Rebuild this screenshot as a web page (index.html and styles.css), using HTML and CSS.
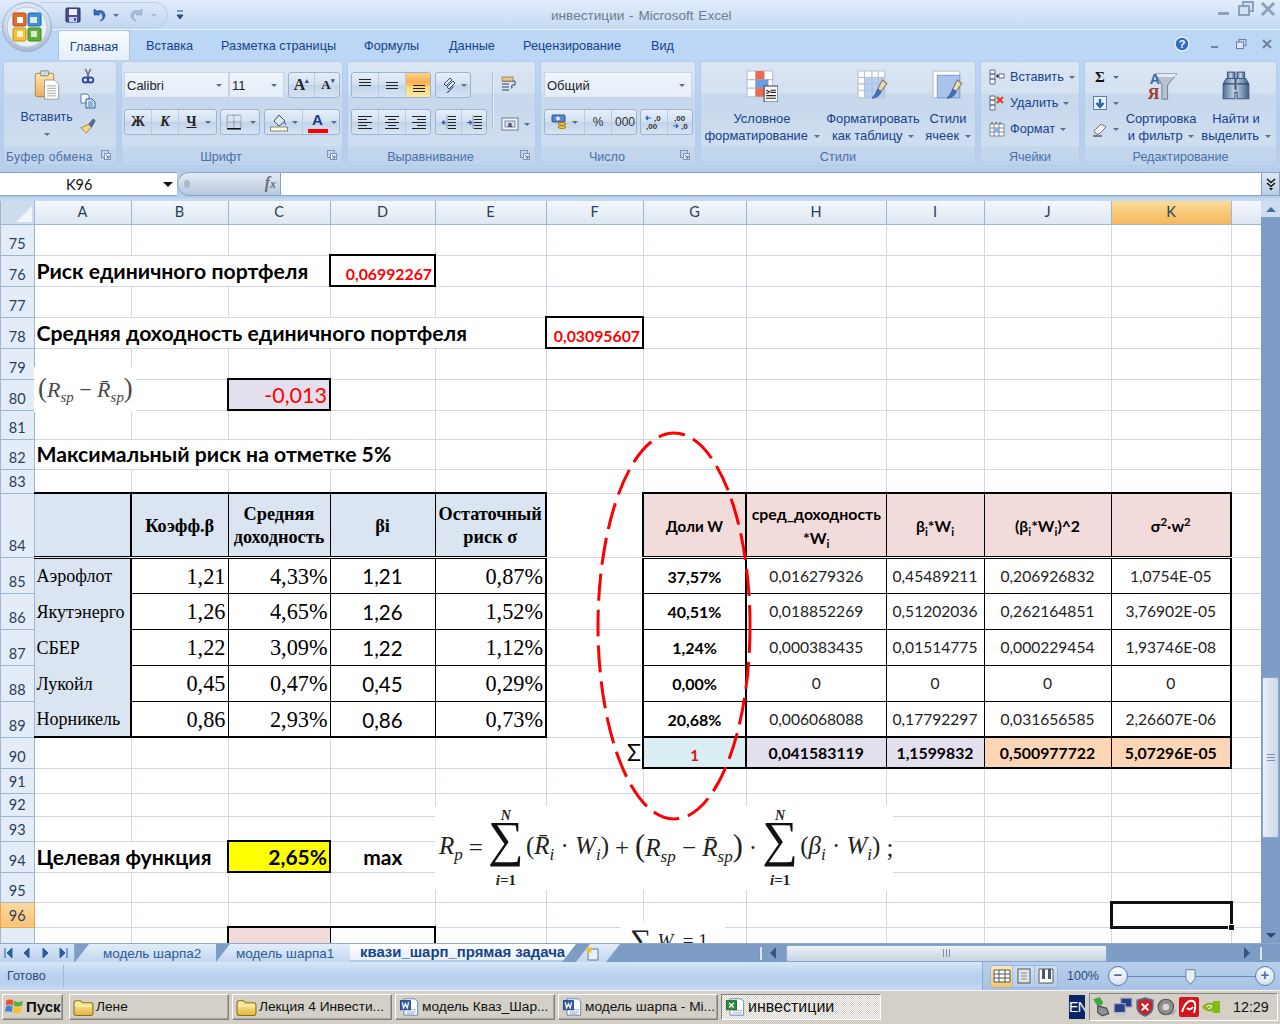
FILE: index.html
```html
<!DOCTYPE html>
<html lang="ru">
<head>
<meta charset="utf-8">
<title>инвестиции - Microsoft Excel</title>
<link rel="stylesheet" href="styles.css">
</head>
<body>
<svg class="defs" width="0" height="0" aria-hidden="true">
  <defs>
    <linearGradient id="gpaper" x1="0" y1="0" x2="0" y2="1"><stop offset="0" stop-color="#ffe7b0"/><stop offset="1" stop-color="#e9b060"/></linearGradient>
    <linearGradient id="gfolder" x1="0" y1="0" x2="0" y2="1"><stop offset="0" stop-color="#fff3a8"/><stop offset="1" stop-color="#e3b63e"/></linearGradient>
    <linearGradient id="gsteel" x1="0" y1="0" x2="1" y2="0"><stop offset="0" stop-color="#4f7098"/><stop offset=".45" stop-color="#c9d8ea"/><stop offset="1" stop-color="#3f5f85"/></linearGradient>
    <symbol id="folder" viewBox="0 0 20 18"><path d="M1 5 Q1 3 3 3H7L9 5H17Q19 5 19 7V15Q19 17 17 17H3Q1 17 1 15Z" fill="url(#gfolder)" stroke="#8a6c1c"/><path d="M2 8H18" stroke="#fff8c8"/></symbol>
    <symbol id="worddoc" viewBox="0 0 22 22"><path d="M5 2H17L20 5V20H5Z" fill="#fff" stroke="#5b7fb2"/><path d="M8 14H18M8 16.500H18M8 18.500H16" stroke="#8aa6cc"/><rect x="1" y="4" width="11" height="10" fill="#3a62a8" stroke="#20407c"/><path d="M3 6L4.500 12L6.500 7.500L8.500 12L10 6" fill="none" stroke="#fff" stroke-width="1.300"/></symbol>
    <symbol id="launcher" viewBox="0 0 10 10"><rect x=".5" y=".5" width="7" height="7" fill="none" stroke="#7b93b4"/><rect x="3.500" y="3.500" width="6" height="6" fill="#f3f7fc" stroke="#7b93b4"/><path d="M5 5L8 8M8 5.500V8H5.500" stroke="#4c6a94" fill="none"/></symbol>
    <symbol id="brush" viewBox="0 0 14 18"><path d="M9 1L13 4L8 11L5 9Z" fill="#e8dcc0" stroke="#8a7a5c"/><path d="M5 9L8 11Q7 16 0 17Q3 14 5 9Z" fill="#3f73c0" stroke="#2b528f" stroke-width=".6"/></symbol>
  </defs>
</svg>

<div class="window">
  <header class="titlebar">
    <div class="qat">
      <svg class="i16" viewBox="0 0 16 16"><rect x="1" y="1" width="14" height="14" rx="1" fill="#4a4f9e" stroke="#262a6a"/><rect x="4" y="2" width="8" height="6" fill="#eef2fa"/><rect x="4" y="10" width="8" height="5" fill="#c9cfe2"/><rect x="9" y="11" width="2" height="3" fill="#4a4f9e"/></svg>
      <svg class="i16 undo" viewBox="0 0 16 16"><path d="M3 2V8H9L7 6Q10 5 11.500 8T9 14Q14 13 14 8Q13 2 6 4L3 2Z" fill="#2f6db5" stroke="#1c4b85" stroke-width=".6"/></svg>
      <span class="caret-s"></span>
      <svg class="i16 redo" viewBox="0 0 16 16"><path d="M13 2V8H7L9 6Q6 5 4.500 8T7 14Q2 13 2 8Q3 2 10 4L13 2Z" fill="#a9bdd6" stroke="#8ea5c2" stroke-width=".6"/></svg>
      <span class="caret-s pale"></span>
    </div>
    <svg class="qat-more" viewBox="0 0 8 12"><path d="M1 2H7M1 6H7L4 10Z" fill="#2b4d7c" stroke="#2b4d7c"/></svg>
    <div class="doc-title">инвестиции - Microsoft Excel</div>
    <div class="win-ctrls">
      <svg class="ctl" viewBox="0 0 16 16"><rect x="2" y="11" width="11" height="3" fill="#8ba1bd"/></svg>
      <svg class="ctl" viewBox="0 0 16 16"><rect x="5" y="1" width="10" height="9" fill="#d3e0f0" stroke="#8ba1bd" stroke-width="2"/><rect x="1" y="5" width="10" height="9" fill="#d3e0f0" stroke="#8ba1bd" stroke-width="2"/></svg>
      <svg class="ctl" viewBox="0 0 16 16"><path d="M2 2L14 14M14 2L2 14" stroke="#8ba1bd" stroke-width="3"/></svg>
    </div>
  </header>

  <div class="office-btn">
    <svg viewBox="0 0 52 52" width="52" height="52">
      <defs><radialGradient id="gorb" cx=".5" cy=".35" r=".75"><stop offset="0" stop-color="#f8fbff"/><stop offset=".6" stop-color="#cfdcee"/><stop offset="1" stop-color="#8b9fbb"/></radialGradient></defs>
      <circle cx="26" cy="26" r="24.500" fill="url(#gorb)" stroke="#9db2cf"/>
      <circle cx="26" cy="26" r="20" fill="#e9eff7" stroke="#b8c6da"/>
      <rect x="12" y="12" width="13" height="13" rx="1.500" fill="#e66c2c" stroke="#b24a18"/>
      <rect x="27" y="12" width="13" height="13" rx="1.500" fill="#3f8fd8" stroke="#1f67aa"/>
      <rect x="12" y="27" width="13" height="13" rx="1.500" fill="#f4c13a" stroke="#c2921a"/>
      <rect x="27" y="27" width="13" height="13" rx="1.500" fill="#62ad3a" stroke="#3e8220"/>
      <rect x="16" y="16" width="6" height="6" fill="#fff"/><rect x="29" y="16" width="7" height="6" fill="#d6e8f8"/><rect x="16" y="30" width="6" height="6" fill="#fff6d6"/><rect x="30" y="30" width="6" height="6" fill="#d8f0c8"/>
    </svg>
  </div>

  <nav class="ribbon-tabs">
    <span class="rtab active">Главная</span>
    <span class="rtab w75">Вставка</span>
    <span class="rtab w143">Разметка страницы</span>
    <span class="rtab w85">Формулы</span>
    <span class="rtab w74">Данные</span>
    <span class="rtab w128">Рецензирование</span>
    <span class="rtab w40">Вид</span>
    <div class="app-ctrls">
      <svg class="help" viewBox="0 0 16 16"><circle cx="8" cy="8" r="7" fill="#2f6ec4" stroke="#e8f0fb" stroke-width="1.500"/><text x="8" y="12" text-anchor="middle" class="help-q">?</text></svg>
      <svg class="ctl-s" viewBox="0 0 12 12"><rect x="2" y="8" width="7" height="2" fill="#6d819c"/></svg>
      <svg class="ctl-s" viewBox="0 0 12 12"><rect x="4" y="1.500" width="7" height="6" fill="none" stroke="#6d819c"/><rect x="1.500" y="4" width="7" height="6.500" fill="#dce8f7" stroke="#6d819c"/></svg>
      <svg class="ctl-s" viewBox="0 0 12 12"><path d="M2 2L10 10M10 2L2 10" stroke="#6d819c" stroke-width="2"/></svg>
    </div>
  </nav>

  <section class="ribbon">
    <div class="group g-clip">
      <div class="gbody clip-body">
        <div class="paste">
          <svg class="paste-ic" viewBox="0 0 30 36"><rect x="1" y="4" width="22" height="28" rx="2" fill="url(#gpaper)" stroke="#a67a3a"/><rect x="7" y="1" width="10" height="6" rx="1.500" fill="#d8d8d8" stroke="#777"/><path d="M12 12H24L29 17V35H12Z" fill="#fff" stroke="#8f8f8f"/><path d="M15 19H26M15 22H26M15 25H26M15 28H26M15 31H26" stroke="#9a9a9a"/></svg>
          <span class="rlabel">Вставить</span>
          <span class="caret-s"></span>
        </div>
        <div class="clip-tools">
          <svg class="i16" viewBox="0 0 16 18"><path d="M5 1L9 10M11 1L7 10" stroke="#6b6f78" stroke-width="1.600"/><circle cx="5" cy="13.500" r="3" fill="none" stroke="#26459a" stroke-width="2"/><circle cx="11" cy="13.500" r="3" fill="none" stroke="#26459a" stroke-width="2"/></svg>
          <svg class="i16" viewBox="0 0 16 16"><path d="M1 1H7L9 3V10H1Z" fill="#fff" stroke="#4d78b5"/><path d="M6 6H12L15 9V15H6Z" fill="#dfe9f7" stroke="#2b5aa0"/><path d="M8 9H13M8 11H13M8 13H13" stroke="#2b5aa0" stroke-width=".8"/></svg>
          <svg class="i16 brush" viewBox="0 0 18 18"><path d="M10 7L13 10L7 17L1 11Z" fill="#f0d68a" stroke="#9a8040"/><path d="M10 7L15 1L17 3L13 10Z" fill="#5a6f9c" stroke="#3d4e78"/></svg>
        </div>
      </div>
      <div class="glabel">Буфер обмена<svg class="launch"><use href="#launcher"/></svg></div>
    </div>

    <div class="group g-font">
      <div class="gbody rows">
        <div class="brow">
          <div class="combo w105"><span>Calibri</span><span class="caret-s"></span></div>
          <div class="combo w55"><span>11</span><span class="caret-s"></span></div>
          <div class="bgroup w52 ml4">
            <span class="b w26 big">A<sup class="tri">▴</sup></span>
            <span class="b w26 big sm">A<sup class="tri">▾</sup></span>
          </div>
        </div>
        <div class="brow">
          <div class="bgroup w93">
            <span class="b w27 fmt">Ж</span>
            <span class="b w27 fmt it">К</span>
            <span class="b w39 fmt ul">Ч<span class="caret-s ml5"></span></span>
          </div>
          <div class="bgroup w40 ml3">
            <span class="b w40">
              <svg class="i16" viewBox="0 0 14 14"><path d="M1 1H13V13H1ZM7 1V13M1 7H13" fill="none" stroke="#7a7a7a" stroke-dasharray="1 1"/><path d="M1 13H13" stroke="#111" stroke-width="1.300"/></svg>
              <span class="caret-s ml5"></span>
            </span>
          </div>
          <div class="bgroup w76 ml4">
            <span class="b w38">
              <svg class="i20" viewBox="0 0 20 20"><path d="M5 9L10 3L16 9L10 14Z" fill="#dfe6ee" stroke="#3c4f68"/><path d="M15 9Q18 12 17 13Q15 13 15 9Z" fill="#3f78c8"/><rect x="1.500" y="15" width="17" height="4" fill="#fffbe0" stroke="#8a8a7a"/></svg>
              <span class="caret-s"></span>
            </span>
            <span class="b w38">
              <span class="colorA">A</span>
              <span class="caret-s"></span>
            </span>
          </div>
        </div>
      </div>
      <div class="glabel lpad">Шрифт<svg class="launch"><use href="#launcher"/></svg></div>
    </div>

    <div class="group g-align">
      <div class="gbody align-body">
        <div class="rows">
          <div class="brow">
            <div class="bgroup w80">
              <span class="b w27"><svg class="lines" viewBox="0 0 16 14"><path d="M2 1.500H14M2 4.500H14M2 7.500H14" stroke="#222"/></svg></span>
              <span class="b w27"><svg class="lines" viewBox="0 0 16 14"><path d="M2 4.500H14M2 7.500H14M2 10.500H14" stroke="#222"/></svg></span>
              <span class="b w26 on"><svg class="lines" viewBox="0 0 16 14"><path d="M2 7.500H14M2 10.500H14M2 13.500H14" stroke="#222"/></svg></span>
            </div>
            <div class="bgroup w36 ml4">
              <span class="b w36"><svg class="i16" viewBox="0 0 16 16"><path d="M2 7L8 1L10 3L4 9ZM5 10L11 4L13 6L7 12Z" fill="#dde6f2" stroke="#3b4f70"/><path d="M3 13L13 13" stroke="#3b4f70" transform="rotate(-45 8 13)"/></svg><span class="caret-s"></span></span>
            </div>
          </div>
          <div class="brow">
            <div class="bgroup w80">
              <span class="b w27"><svg class="lines" viewBox="0 0 16 14"><path d="M1 1.500H15M1 4.500H10M1 7.500H15M1 10.500H10M1 13.500H15" stroke="#222"/></svg></span>
              <span class="b w27"><svg class="lines" viewBox="0 0 16 14"><path d="M1 1.500H15M4 4.500H12M1 7.500H15M4 10.500H12M1 13.500H15" stroke="#222"/></svg></span>
              <span class="b w26"><svg class="lines" viewBox="0 0 16 14"><path d="M1 1.500H15M6 4.500H15M1 7.500H15M6 10.500H15M1 13.500H15" stroke="#222"/></svg></span>
            </div>
            <div class="bgroup w52 ml4">
              <span class="b w26"><svg class="lines" viewBox="0 0 16 14"><path d="M7 1.500H15M7 4.500H15M7 7.500H15M7 10.500H15M7 13.500H15" stroke="#222"/><path d="M1 7.500H5M1 7.500L3 5.500V9.500Z" stroke="#2f62b0" fill="#2f62b0"/><path d="M6 .5V14" stroke="#555" stroke-dasharray="1 1"/></svg></span>
              <span class="b w26"><svg class="lines" viewBox="0 0 16 14"><path d="M7 1.500H15M7 4.500H15M7 7.500H15M7 10.500H15M7 13.500H15" stroke="#222"/><path d="M0 7.500H4M5 7.500L3 5.500V9.500Z" stroke="#2f62b0" fill="#2f62b0"/><path d="M6 .5V14" stroke="#555" stroke-dasharray="1 1"/></svg></span>
            </div>
          </div>
        </div>
        <div class="vsep"></div>
        <div class="align-extra">
          <svg class="i18" viewBox="0 0 18 16"><path d="M1 2H11M1 5H14V9H11M1 8H8M1 11H8M1 14H8" fill="none" stroke="#33476a"/><rect x="1" y="1" width="11" height="4" fill="#e9c68a" stroke="#8a6c3c" stroke-width=".7"/><path d="M12 11L10 9V13Z" fill="#2f62b0"/></svg>
          <span class="ic-caret"><svg class="i18" viewBox="0 0 18 14"><rect x="1" y="1" width="16" height="12" fill="#f4f6fa" stroke="#6a7b93"/><rect x="4" y="4" width="10" height="6" fill="#d5e1f0" stroke="#5c7095" stroke-width=".8"/><text x="9" y="9.500" text-anchor="middle" class="merge-a">a</text></svg><span class="caret-s ml5"></span></span>
        </div>
      </div>
      <div class="glabel lpad">Выравнивание<svg class="launch"><use href="#launcher"/></svg></div>
    </div>

    <div class="group g-num">
      <div class="gbody rows">
        <div class="brow">
          <div class="combo w148"><span>Общий</span><span class="caret-s"></span></div>
        </div>
        <div class="brow">
          <div class="bgroup w93">
            <span class="b w40"><svg class="i18" viewBox="0 0 18 18"><rect x="1" y="2" width="13" height="7" rx="1" fill="#5b87c9" stroke="#2a4f8a"/><circle cx="7" cy="5.500" r="2" fill="#dce8f6"/><ellipse cx="11" cy="11" rx="4" ry="1.500" fill="#f0c64a" stroke="#a47f1a"/><ellipse cx="11" cy="14" rx="4" ry="1.500" fill="#f0c64a" stroke="#a47f1a"/></svg><span class="caret-s"></span></span>
            <span class="b w27 numb">%</span>
            <span class="b w26 numb">000</span>
          </div>
          <div class="bgroup w53 ml3">
            <span class="b w27"><svg class="i20" viewBox="0 0 20 18"><path d="M7 5H2M4 3L2 5L4 7" stroke="#2f62b0" fill="none" stroke-width="1.200"/><text x="10" y="8" class="dec">,0</text><text x="2" y="16" class="dec">,00</text></svg></span>
            <span class="b w26"><svg class="i20" viewBox="0 0 20 18"><text x="3" y="8" class="dec">,00</text><path d="M2 13H7M5 11L7 13L5 15" stroke="#2f62b0" fill="none" stroke-width="1.200"/><text x="10" y="16" class="dec">,0</text></svg></span>
          </div>
        </div>
      </div>
      <div class="glabel lpad">Число<svg class="launch"><use href="#launcher"/></svg></div>
    </div>

    <div class="group g-styles">
      <div class="gbody big-row">
        <div class="bigbtn w120">
          <svg class="i30" viewBox="0 0 30 30"><path d="M1 1H25V25H1ZM1 9H25M1 17H25M9 1V25M17 1V25" fill="#fff" stroke="#b6bfcc"/><rect x="9" y="1" width="8" height="8" fill="#ec6a4e"/><rect x="9" y="9" width="12" height="8" fill="#6d9be0"/><rect x="9" y="17" width="8" height="8" fill="#ec6a4e"/><rect x="17" y="15" width="13" height="15" fill="#f7f7f7" stroke="#404a5c"/><path d="M19 19L22 20.500L19 22M23 19H28M23 21H28M19 24H28M19 26.500H28" stroke="#222" fill="none"/></svg>
          <span class="rlabel">Условное<br>форматирование <i class="caret-s"></i></span>
        </div>
        <div class="bigbtn w102">
          <svg class="i30" viewBox="0 0 30 30"><path d="M1 1H26V26H1ZM1 7H26M1 13H26M1 19H26M7 1V26M14 1V26M20 1V26" fill="#fff" stroke="#b6bfcc"/><rect x="7" y="7" width="19" height="19" fill="#a9c3ec" opacity=".8"/><use href="#brush" x="14" y="8" width="15" height="20"/></svg>
          <span class="rlabel">Форматировать<br>как таблицу <i class="caret-s"></i></span>
        </div>
        <div class="bigbtn w48">
          <svg class="i30" viewBox="0 0 30 30"><rect x="1" y="1" width="25" height="25" fill="#fff" stroke="#b6bfcc"/><rect x="5" y="5" width="21" height="21" fill="#a9c3ec" stroke="#7d9fd8"/><use href="#brush" x="14" y="8" width="15" height="20"/></svg>
          <span class="rlabel">Стили<br>ячеек <i class="caret-s"></i></span>
        </div>
      </div>
      <div class="glabel">Стили</div>
    </div>

    <div class="group g-cells">
      <div class="gbody cell-cmds">
        <div class="cmd"><svg class="i16" viewBox="0 0 16 16"><path d="M1 1H6V5H1ZM1 5H6V10H1ZM1 10H6V15H1ZM10 5H15V9H10Z" fill="#fff" stroke="#5c6a7e"/><path d="M7 7H10M8.500 5.500V8.500" stroke="#222"/></svg><span>Вставить</span><span class="caret-s"></span></div>
        <div class="cmd"><svg class="i16" viewBox="0 0 16 16"><path d="M1 1H6V5H1ZM1 5H6V10H1ZM1 10H6V15H1Z" fill="#fff" stroke="#5c6a7e"/><path d="M8 2L14 8M14 2L8 8" stroke="#e0402a" stroke-width="2.200"/></svg><span>Удалить</span><span class="caret-s"></span></div>
        <div class="cmd"><svg class="i16" viewBox="0 0 16 16"><path d="M1 3H15V15H1ZM1 7H15M1 11H15M5 3V15M10 3V15" fill="#fff" stroke="#7b8798"/><rect x="5" y="7" width="5" height="4" fill="#8fb0e4"/><path d="M3 1V3M7 1V3M11 1V3" stroke="#444"/></svg><span>Формат</span><span class="caret-s"></span></div>
      </div>
      <div class="glabel">Ячейки</div>
    </div>

    <div class="group g-edit">
      <div class="gbody edit-body">
        <div class="edit-tools">
          <div class="tool"><span class="sigma">Σ</span><span class="caret-s"></span></div>
          <div class="tool"><svg class="i16" viewBox="0 0 16 16"><rect x="1.500" y="1.500" width="13" height="13" fill="#e8f0fb" stroke="#5c7fb0"/><path d="M8 4V10M4.500 8L8 12L11.500 8" stroke="#2f62b0" stroke-width="2.400" fill="none"/></svg><span class="caret-s"></span></div>
          <div class="tool"><svg class="i16" viewBox="0 0 16 16"><path d="M2 10L9 3L14 6L7 13H4Z" fill="#f6f6f6" stroke="#6b7380"/><path d="M1 15H10" stroke="#222"/></svg><span class="caret-s"></span></div>
        </div>
        <div class="bigbtn w72">
          <svg class="i30" viewBox="0 0 34 32"><path d="M11 3H34L24 15V30H18V15Z" fill="#b8c3d0" stroke="#6b7a8e"/><path d="M11 3H34L31 6.500H14Z" fill="#e6ebf2"/><text x="5" y="14" class="az-a">A</text><text x="3" y="30" class="az-z">Я</text></svg>
          <span class="rlabel">Сортировка<br>и фильтр <i class="caret-s"></i></span>
        </div>
        <div class="bigbtn w72 find">
          <svg class="i30" viewBox="0 0 30 30"><rect x="7" y="2" width="7" height="7" fill="url(#gsteel)" stroke="#3e587e"/><rect x="16" y="2" width="7" height="7" fill="url(#gsteel)" stroke="#3e587e"/><path d="M3 13L6 8H14V18H15V8H24L27 13V27H16V21H14V27H3Z" fill="url(#gsteel)" stroke="#3e587e"/><path d="M3 13H14M16 13H27" stroke="#2f4668"/></svg>
          <span class="rlabel">Найти и<br>выделить <i class="caret-s"></i></span>
        </div>
      </div>
      <div class="glabel">Редактирование</div>
    </div>
  </section>

  <div class="formula-bar">
    <div class="namebox"><span class="cellref">K96</span><span class="nb-arrow"></span></div>
    <div class="fx-pill"><span class="pill-dot"></span><span class="fx">f<span class="fx-x">x</span></span></div>
    <div class="fx-input"></div>
    <div class="fx-expand"><svg viewBox="0 0 12 14" width="12" height="14"><path d="M2 2L6 5.500L10 2M2 6L6 9.500L10 6" stroke="#111" stroke-width="1.500" fill="none"/><path d="M4 11H8L6 13.500Z" fill="#111"/></svg></div>
  </div>

  <div class="sheet-wrap">
    <div class="grid-area">
      <table class="sheet">
        <colgroup><col class="c-rh"><col class="c-a"><col class="c-b"><col class="c-c"><col class="c-d"><col class="c-e"><col class="c-f"><col class="c-g"><col class="c-h"><col class="c-i"><col class="c-j"><col class="c-k"><col class="c-l"></colgroup>
        <thead>
          <tr class="h-hd"><th class="corner"><span class="corner-tri"></span></th><th>A</th><th>B</th><th>C</th><th>D</th><th>E</th><th>F</th><th>G</th><th>H</th><th>I</th><th>J</th><th class="col-on">K</th><th class="col-end"></th></tr>
        </thead>
        <tbody>
          <tr class="h31"><th>75</th><td></td><td></td><td></td><td></td><td></td><td></td><td></td><td></td><td></td><td></td><td></td><td></td></tr>
          <tr class="h31"><th>76</th><td colspan="3" class="lbl">Риск единичного портфеля</td><td class="box val-red">0,06992267</td><td></td><td></td><td></td><td></td><td></td><td></td><td></td><td></td></tr>
          <tr class="h31"><th>77</th><td></td><td></td><td></td><td></td><td></td><td></td><td></td><td></td><td></td><td></td><td></td><td></td></tr>
          <tr class="h31"><th>78</th><td colspan="5" class="lbl">Средняя доходность единичного портфеля</td><td class="box val-red">0,03095607</td><td></td><td></td><td></td><td></td><td></td><td></td></tr>
          <tr class="h31"><th>79</th><td></td><td></td><td></td><td></td><td></td><td></td><td></td><td></td><td></td><td></td><td></td><td></td></tr>
          <tr class="h31"><th>80</th><td></td><td></td><td class="box val-big lilac">-0,013</td><td></td><td></td><td></td><td></td><td></td><td></td><td></td><td></td><td></td></tr>
          <tr class="h29"><th>81</th><td></td><td></td><td></td><td></td><td></td><td></td><td></td><td></td><td></td><td></td><td></td><td></td></tr>
          <tr class="h30"><th>82</th><td colspan="4" class="lbl">Максимальный риск на отметке 5%</td><td></td><td></td><td></td><td></td><td></td><td></td><td></td><td></td></tr>
          <tr class="h24"><th>83</th><td></td><td></td><td></td><td></td><td></td><td></td><td></td><td></td><td></td><td></td><td></td><td></td></tr>
          <tr class="h64">
            <th>84</th>
            <td class="lh t2 r2 dbl"></td>
            <td class="lh t2 r1 dbl">Коэфф.β</td>
            <td class="lh t2 r1 dbl">Средняя<br>доходность</td>
            <td class="lh t2 r1 dbl">βi</td>
            <td class="lh t2 r2 dbl">Остаточный<br>риск σ</td>
            <td></td>
            <td class="rh rh-w t2 l2 r2 dbl">Доли W</td>
            <td class="rh t2 r1 dbl">сред_доходность<br><span class="rh2">*W<sub>i</sub></span></td>
            <td class="rh t2 r1 dbl">β<sub>i</sub>*W<sub>i</sub></td>
            <td class="rh t2 r1 dbl">(β<sub>i</sub>*W<sub>i</sub>)^2</td>
            <td class="rh t2 r2 dbl">σ<sup>2</sup>·w<sup>2</sup></td>
            <td></td>
          </tr>
          <tr class="h36"><th>85</th><td class="ln r2">Аэрофлот</td><td class="sv r1 b1">1,21</td><td class="sv r1 b1">4,33%</td><td class="cv r1 b1">1,21</td><td class="sv r2 b1">0,87%</td><td></td><td class="wv l2 r2 b1">37,57%</td><td class="nv r1 b1">0,016279326</td><td class="nv r1 b1">0,45489211</td><td class="nv r1 b1">0,206926832</td><td class="nv r2 b1">1,0754E-05</td><td></td></tr>
          <tr class="h36"><th>86</th><td class="ln r2">Якутэнерго</td><td class="sv r1 b1">1,26</td><td class="sv r1 b1">4,65%</td><td class="cv r1 b1">1,26</td><td class="sv r2 b1">1,52%</td><td></td><td class="wv l2 r2 b1">40,51%</td><td class="nv r1 b1">0,018852269</td><td class="nv r1 b1">0,51202036</td><td class="nv r1 b1">0,262164851</td><td class="nv r2 b1">3,76902E-05</td><td></td></tr>
          <tr class="h36"><th>87</th><td class="ln r2">СБЕР</td><td class="sv r1 b1">1,22</td><td class="sv r1 b1">3,09%</td><td class="cv r1 b1">1,22</td><td class="sv r2 b1">1,12%</td><td></td><td class="wv l2 r2 b1">1,24%</td><td class="nv r1 b1">0,000383435</td><td class="nv r1 b1">0,01514775</td><td class="nv r1 b1">0,000229454</td><td class="nv r2 b1">1,93746E-08</td><td></td></tr>
          <tr class="h36"><th>88</th><td class="ln r2">Лукойл</td><td class="sv r1 b1">0,45</td><td class="sv r1 b1">0,47%</td><td class="cv r1 b1">0,45</td><td class="sv r2 b1">0,29%</td><td></td><td class="wv l2 r2 b1">0,00%</td><td class="nv r1 b1">0</td><td class="nv r1 b1">0</td><td class="nv r1 b1">0</td><td class="nv r2 b1">0</td><td></td></tr>
          <tr class="h36"><th>89</th><td class="ln r2 b2">Норникель</td><td class="sv r1 b2">0,86</td><td class="sv r1 b2">2,93%</td><td class="cv r1 b2">0,86</td><td class="sv r2 b2">0,73%</td><td></td><td class="wv l2 r2 b2">20,68%</td><td class="nv r1 b2">0,006068088</td><td class="nv r1 b2">0,17792297</td><td class="nv r1 b2">0,031656585</td><td class="nv r2 b2">2,26607E-06</td><td></td></tr>
          <tr class="h31"><th>90</th><td></td><td></td><td></td><td></td><td></td><td class="sigma-cell">Σ</td><td class="wred l2 r2 b2 pale-blue">1</td><td class="wt r1 b2 lilac">0,041583119</td><td class="wt r1 b2 lilac">1,1599832</td><td class="wt r1 b2 peach">0,500977722</td><td class="wt r2 b2 peach">5,07296E-05</td><td></td></tr>
          <tr class="h25"><th>91</th><td></td><td></td><td></td><td></td><td></td><td></td><td></td><td></td><td></td><td></td><td></td><td></td></tr>
          <tr class="h23"><th>92</th><td></td><td></td><td></td><td></td><td></td><td></td><td></td><td></td><td></td><td></td><td></td><td></td></tr>
          <tr class="h25"><th>93</th><td></td><td></td><td></td><td></td><td></td><td></td><td></td><td></td><td></td><td></td><td></td><td></td></tr>
          <tr class="h31"><th>94</th><td colspan="2" class="lbl">Целевая функция</td><td class="box val-yel">2,65%</td><td class="maxc">max</td><td></td><td></td><td></td><td></td><td></td><td></td><td></td><td></td></tr>
          <tr class="h30"><th>95</th><td></td><td></td><td></td><td></td><td></td><td></td><td></td><td></td><td></td><td></td><td></td><td></td></tr>
          <tr class="h25"><th class="row-on">96</th><td></td><td></td><td></td><td></td><td></td><td></td><td></td><td></td><td></td><td></td><td class="sel"><span class="handle"></span></td><td></td></tr>
          <tr class="h30"><th></th><td></td><td></td><td class="t2 l2 r1 pink"></td><td class="t2 r2"></td><td></td><td></td><td></td><td></td><td></td><td></td><td></td><td></td></tr>
        </tbody>
      </table>

      <div class="obj obj-rsp"><span class="par">(</span><i>R<sub>sp</sub></i> − <i>R̄<sub>sp</sub></i><span class="par">)</span></div>

      <div class="obj obj-main">
        <i>R<sub>p</sub></i><span class="eq">=</span>
        <span class="sum"><i>N</i><span class="sg">∑</span><b><i>i</i>=1</b></span>
        <span>(<i>R̄<sub>i</sub></i> · <i>W<sub>i</sub></i>)</span><span class="eq">+</span>
        <span><span class="par">(</span><i>R<sub>sp</sub></i> − <i>R̄<sub>sp</sub></i><span class="par">)</span></span><span class="eq">·</span>
        <span class="sum"><i>N</i><span class="sg">∑</span><b><i>i</i>=1</b></span>
        <span>(<i>β<sub>i</sub></i> · <i>W<sub>i</sub></i>)</span><span class="eq">;</span>
      </div>

      <div class="obj obj-sum"><span class="sg2">∑</span><i>W<sub>i</sub></i> = 1</div>

      <svg class="ellipse" viewBox="0 0 160 392" width="160" height="392"><ellipse cx="80" cy="196" rx="76" ry="193" fill="none" stroke="#ff0000" stroke-width="3" stroke-dasharray="27 9"/></svg>
    </div>

    <aside class="vscroll">
      <span class="vs-btn"><i class="tri-up"></i></span>
      <div class="vs-track"><span class="vs-thumb"><i class="grip"></i></span></div>
      <span class="vs-btn"><i class="tri-down"></i></span>
    </aside>
  </div>

  <div class="tabs-bar">
    <div class="tab-nav">
      <svg viewBox="0 0 72 12" width="72" height="12"><path d="M3 1V11M10 1L5 6L10 11ZM27 1L22 6L27 11ZM41 1L46 6L41 11ZM58 1L63 6L58 11ZM65 1V11" fill="#2f5f9f" stroke="#2f5f9f"/></svg>
    </div>
    <span class="stab s1">модель шарпа2</span>
    <span class="stab s2">модель шарпа1</span>
    <span class="stab active">квази_шарп_прямая задача</span>
    <span class="stab newtab"><svg viewBox="0 0 16 16" width="16" height="16"><path d="M3 4H13V15H3Z" fill="#e8eff8" stroke="#5d7ba0"/><path d="M4 1L5 3L7 2L6 4L8 5L6 6L7 8L5 7L4 9L3 7L1 8L2 6L0 5L2 4L1 2L3 3Z" fill="#f4c23c"/></svg></span>
    <div class="tabs-fill"></div>
    <div class="hscroll">
      <span class="hs-split"></span>
      <i class="tri-left"></i>
      <span class="hs-thumb"><i class="grip-v"></i></span>
      <i class="tri-right"></i>
      <span class="hs-split end"></span>
    </div>
  </div>

  <footer class="statusbar">
    <span class="st-ready">Готово</span>
    <div class="st-right">
      <div class="views">
        <span class="vbtn on"><svg viewBox="0 0 18 16" width="18" height="16"><path d="M1 2H17V14H1ZM1 6H17M1 10H17M6 2V14M12 2V14" fill="#fff" stroke="#555"/></svg></span>
        <span class="vbtn"><svg viewBox="0 0 18 16" width="18" height="16"><rect x="3" y="1" width="12" height="14" fill="#dfe5ec" stroke="#555"/><path d="M6 5H12M6 8H12M6 11H12" stroke="#888"/></svg></span>
        <span class="vbtn"><svg viewBox="0 0 18 16" width="18" height="16"><path d="M2 1H16V15H2Z" fill="#fff" stroke="#555"/><path d="M5 1V11H8V1M11 1V11H14V1" fill="#4f5a68"/></svg></span>
      </div>
      <span class="zoom-txt">100%</span>
      <span class="zbtn">−</span>
      <div class="zslider"><svg class="zthumb" viewBox="0 0 12 18" width="11" height="18"><path d="M1 1H11V11L6 17L1 11Z" fill="#e8eef6" stroke="#5d7ba0"/></svg></div>
      <span class="zbtn">+</span>
    </div>
  </footer>

  <div class="taskbar">
    <span class="start">
      <svg viewBox="0 0 20 18" width="19" height="17"><path d="M1 3Q5 0 9 3L8 8Q4 6 1 8Z" fill="#e8542a"/><path d="M10 3Q14 6 19 3L18 8Q13 10 9 8Z" fill="#58b03a"/><path d="M1 9Q4 7 8 9L7 15Q3 13 0 15Z" fill="#3f82d8"/><path d="M9 9Q13 11 18 9L17 15Q12 17 8 15Z" fill="#f3c230"/></svg>
      Пуск
    </span>
    <span class="task"><svg class="tk-ic"><use href="#folder"/></svg>Лене</span>
    <span class="task"><svg class="tk-ic"><use href="#folder"/></svg>Лекция 4 Инвести...</span>
    <span class="task"><svg class="tk-ic"><use href="#worddoc"/></svg>модель Кваз_Шар...</span>
    <span class="task"><svg class="tk-ic"><use href="#worddoc"/></svg>модель шарпа - Mi...</span>
    <span class="task current"><svg class="tk-ic" viewBox="0 0 22 22"><path d="M5 2H17L20 5V20H5Z" fill="#fff" stroke="#5b7fb2"/><path d="M8 15H18M8 17.500H18" stroke="#8aa6cc"/><rect x="1" y="4" width="11" height="10" fill="#2f8a3c" stroke="#1c6228"/><path d="M4 6.500L9 11.500M9 6.500L4 11.500" stroke="#fff" stroke-width="1.500"/></svg>инвестиции</span>
    <span class="tb-fill"></span>
    <span class="lang">EN</span>
    <div class="tray">
      <svg class="tr-ic" viewBox="0 0 18 18"><path d="M2 2L8 0L11 5L9 8L5 7Z" fill="#3dab3d"/><path d="M6 8L14 10L16 15L10 17L6 14Z" fill="#8c9299" stroke="#444"/></svg>
      <svg class="tr-ic" viewBox="0 0 18 18"><rect x="7" y="1" width="10" height="8" fill="#2c3f8f" stroke="#aab"/><rect x="1" y="6" width="10" height="8" fill="#2c3f8f" stroke="#aab"/><rect x="2" y="14" width="9" height="3" fill="#bcc"/></svg>
      <svg class="tr-ic" viewBox="0 0 18 18"><path d="M9 1L16 3V10Q15 15 9 17Q3 15 2 10V3Z" fill="#c6222c" stroke="#5b6a84" stroke-width="1.500"/><path d="M6 6L12 12M12 6L6 12" stroke="#fff" stroke-width="1.800"/></svg>
      <svg class="tr-ic" viewBox="0 0 18 18"><circle cx="8" cy="9" r="7" fill="#8f8f8f" stroke="#555"/><circle cx="8" cy="9" r="3" fill="#d8d8d8"/><path d="M13 16L17 12" stroke="#8a8fd8"/></svg>
      <svg class="tr-ic red" viewBox="0 0 20 20"><rect x="0" y="0" width="20" height="20" rx="2" fill="#d3141c"/><path d="M3 15Q7 2 14 4Q18 6 15 16M8 11Q11 14 14 10" fill="none" stroke="#fff" stroke-width="2"/></svg>
      <svg class="tr-ic" viewBox="0 0 20 14"><path d="M1 7Q6 1 12 3V1H19V13H12V11Q6 13 1 7Z" fill="#86b817"/><path d="M5 7Q8 4 11 6Q10 9 7 8.500" fill="none" stroke="#fff"/></svg>
      <span class="clock">12:29</span>
    </div>
  </div>
</div>
</body>
</html>
```
FILE: styles.css
```css
* { box-sizing: border-box; }
html, body { margin: 0; padding: 0; }
body { width: 1280px; height: 1024px; overflow: hidden; font-family: "Liberation Sans", Arial, sans-serif; background: #d4d0c8; }
.defs { position: absolute; }
.window { position: relative; display: flex; flex-direction: column; width: 1280px; height: 1024px; overflow: hidden; }

/* generic carets */
.caret-s { display: inline-block; width: 0; height: 0; border-left: 3px solid transparent; border-right: 3px solid transparent; border-top: 3px solid #546e95; flex: none; vertical-align: middle; }
.caret-s.pale { border-top-color: #a8bbd3; }
.ml3 { margin-left: 3px; } .ml4 { margin-left: 4px; } .ml5 { margin-left: 5px; }

/* title bar */
.titlebar { height: 30px; flex: none; display: flex; align-items: center; position: relative; background: linear-gradient(#e0ecfb, #d3e3f7 50%, #c5d9f2); border-bottom: 1px solid #e9f2fc; }
.qat { position: absolute; left: 40px; top: 2px; width: 128px; height: 26px; display: flex; align-items: center; padding-left: 25px; gap: 7px; border: 1px solid #b9cfe9; border-left: 0; border-radius: 0 13px 13px 0; background: linear-gradient(#dbe8f8, #c3d7f0); }
.i16 { width: 16px; height: 16px; flex: none; }
.i18 { width: 18px; height: 18px; flex: none; }
.i20 { width: 20px; height: 20px; flex: none; }
.i30 { width: 32px; height: 32px; flex: none; }
.undo { margin-left: 3px; margin-right: -1px; }
.redo { margin-left: 3px; margin-right: -1px; }
.qat-more { position: absolute; left: 176px; top: 9px; width: 8px; height: 12px; }
.doc-title { position: absolute; left: 551px; top: 8px; font-size: 13.600px; color: #6d7c92; white-space: pre; word-spacing: 1px; }
.win-ctrls { position: absolute; right: 4px; top: 1px; display: flex; gap: 6px; }
.ctl { width: 16px; height: 16px; }

.office-btn { position: absolute; left: 1px; top: 1px; width: 52px; height: 52px; z-index: 3; }

/* ribbon tabs */
.ribbon-tabs { height: 30px; flex: none; display: flex; align-items: flex-end; padding-left: 58px; background: #bcd6f6; position: relative; }
.rtab { height: 30px; font-size: 12.700px; color: #15428b; display: flex; align-items: center; padding-top: 2px; white-space: nowrap; flex: none; }
.rtab.active { width: 72px; margin-right: 16px; justify-content: center; border: 1px solid #a9c4e4; border-bottom: 0; border-radius: 3px 3px 0 0; background: linear-gradient(#fbfdff, #e3edf9); }
.w75 { width: 75px; } .w143 { width: 143px; } .w85 { width: 85px; } .w74 { width: 74px; } .w128 { width: 128px; } .w40 { width: 40px; }
.app-ctrls { position: absolute; right: 7px; top: 6px; display: flex; align-items: center; gap: 12px; }
.help { width: 16px; height: 16px; margin-right: 5px; }
.help-q { font: bold 11px "Liberation Sans", sans-serif; fill: #fff; }
.ctl-s { width: 12px; height: 12px; margin-left: 2px; }

/* ribbon */
.ribbon { height: 108px; flex: none; display: flex; gap: 4px; padding: 1px 3px 2px; background: linear-gradient(#bcd6f6, #b4cdef 60%, #b9d0ee); }
.group { display: flex; flex-direction: column; border: 1px solid #b6cbe5; border-radius: 3px; background: linear-gradient(#dbe6f4, #d4e1f1 30%, #c7d7ec 32%, #d2e0f1); overflow: hidden; flex: none; }
.g-clip { width: 114px; } .g-font { width: 222px; } .g-align { width: 189px; } .g-num { width: 156px; } .g-styles { width: 276px; } .g-cells { width: 100px; } .g-edit { width: 193px; }
.gbody { height: 84px; flex: none; }
.glabel { height: 20px; flex: none; position: relative; display: flex; align-items: center; justify-content: center; padding-top: 1px; font-size: 12.600px; color: #4a70a8; background: linear-gradient(#c6d8ee, #bdd2ec); }
.glabel.lpad { padding-right: 22px; }
.g-clip .glabel { justify-content: flex-start; padding-left: 2px; letter-spacing: .45px; font-size: 12px; }
.launch { position: absolute; right: 5px; top: 4px; width: 10px; height: 10px; }
.rlabel { font-size: 12.900px; color: #15428b; line-height: 17px; text-align: center; white-space: nowrap; display: block; }
.rlabel .caret-s { vertical-align: 2px; margin-left: 2px; }

.rows { display: flex; flex-direction: column; gap: 11px; padding: 10px 0 0 2px; }
.g-align .rows, .g-num .rows { padding-left: 3px; }
.brow { display: flex; height: 26px; }
.combo { height: 26px; display: flex; align-items: center; justify-content: space-between; padding: 0 6px 0 2px; background: linear-gradient(#f0f5fc, #e4edf8); border: 1px solid #c5d5e9; font-size: 13px; color: #222; }
.w105 { width: 105px; } .w55 { width: 55px; } .w148 { width: 148px; }
.bgroup { height: 26px; display: flex; border: 1px solid #9ab4d4; border-radius: 3px; background: linear-gradient(#e6eff9, #d3e0f1 48%, #c3d4ea 52%, #d6e3f3); overflow: hidden; flex: none; }
.w52 { width: 52px; } .w93 { width: 93px; } .w76 { width: 76px; } .w80 { width: 80px; } .w36 { width: 36px; } .w53 { width: 53px; }
.b { height: 100%; display: flex; align-items: center; justify-content: center; gap: 3px; border-right: 1px solid #b7cbe3; color: #222; flex: none; }
.b:last-child { border-right: 0; }
.w26 { width: 26px; } .w27 { width: 27px; } .w38 { width: 38px; } .w39 { width: 39px; }
.b.on { background: linear-gradient(#fcd38a, #f9ae50 40%, #fdd978 60%, #ffe9a8); }
.big { font: bold 16px "Liberation Serif", serif; position: relative; gap: 0; }
.big.sm { font-size: 13px; }
.tri { font-size: 7px; color: #2d4f80; line-height: 1; vertical-align: super; margin-top: -8px; }
.fmt { font: bold 14px "Liberation Serif", serif; }
.fmt.it { font-style: italic; }
.fmt.ul { text-decoration: underline; }
.colorA { display: block; width: 20px; text-align: center; font: bold 15px/16px "Liberation Sans", sans-serif; color: #1b3c78; border-bottom: 4px solid #f00; height: 21px; }
.lines { width: 16px; height: 14px; }
.numb { font-size: 12px; color: #333; }
.dec { font: bold 8px "Liberation Sans", sans-serif; fill: #333; }
.merge-a { font: bold 7px "Liberation Sans", sans-serif; fill: #223; }

.clip-body { display: flex; }
.paste { width: 71px; display: flex; flex-direction: column; align-items: center; padding: 8px 0 0 14px; }
.paste-ic { width: 26px; height: 30px; margin-bottom: 9px; }
.paste .rlabel { margin-bottom: 7px; font-size: 12.300px; }
.clip-tools { display: flex; flex-direction: column; align-items: center; gap: 9px; padding-top: 6px; width: 26px; }

.align-body { display: flex; }
.vsep { width: 2px; height: 55px; margin: 11px 0 0 5px; background: #a9bfdc; border-right: 1px solid #e6eef8; flex: none; }
.align-extra { display: flex; flex-direction: column; gap: 22px; padding: 13px 0 0 7px; }
.ic-caret { display: flex; align-items: center; }

.big-row { display: flex; padding: 8px 0 0 1px; }
.bigbtn { display: flex; flex-direction: column; align-items: center; flex: none; }
.bigbtn .i30 { margin-bottom: 8px; }
.w120 { width: 120px; } .w102 { width: 102px; } .w48 { width: 48px; } .w72 { width: 72px; }
.find { margin-left: 3px; }

.cell-cmds { display: flex; flex-direction: column; padding: 5px 0 0 8px; gap: 6px; }
.cmd { height: 20px; display: flex; align-items: center; gap: 5px; font-size: 12.700px; color: #15428b; white-space: nowrap; }
.edit-body { display: flex; padding: 8px 0 0 3px; }
.edit-tools { width: 37px; display: flex; flex-direction: column; gap: 6px; padding: 0 0 0 4px; margin-top: -3px; }
.tool { height: 20px; display: flex; align-items: center; gap: 5px; }
.sigma { font: bold 15px "Liberation Serif", serif; width: 16px; text-align: center; color: #111; }
.az-a { font: bold 15px "Liberation Sans", sans-serif; fill: #3c68b0; }
.az-z { font: bold 17px "Liberation Serif", serif; fill: #a23a30; }

/* formula bar */
.formula-bar { height: 30px; flex: none; display: flex; align-items: stretch; padding: 4px 0 2px; background: #b6cee9; }
.namebox { width: 177px; display: flex; align-items: center; position: relative; background: #fff; border-top: 1px solid #87a3c4; border-bottom: 1px solid #87a3c4; }
.cellref { position: absolute; left: 66px; font: 14.5px "Lato", "Liberation Sans", sans-serif; color: #111; }
.nb-arrow { position: absolute; right: 4px; top: 9px; border-left: 5px solid transparent; border-right: 5px solid transparent; border-top: 5px solid #111; }
.fx-pill { width: 104px; position: relative; border-radius: 12px 0 0 12px; background: linear-gradient(#e2eaf4, #b8c9dd); border: 1px solid #87a3c4; border-right: 1px solid #87a3c4; }
.pill-dot { position: absolute; left: 6px; top: 7px; width: 6px; height: 8px; border-radius: 3px; background: #aeb9c6; }
.fx { position: absolute; right: 4px; top: 1px; font: italic bold 16px "Liberation Serif", serif; color: #6a7078; }
.fx-x { font-size: 12px; }
.fx-input { flex: 1; background: #fff; border-top: 1px solid #87a3c4; border-bottom: 1px solid #87a3c4; }
.fx-expand { width: 19px; display: flex; align-items: center; justify-content: center; background: linear-gradient(#dce7f4, #b9cde4); border: 1px solid #87a3c4; }

/* sheet */
.sheet-wrap { height: 745px; flex: none; display: flex; border-top: 3px solid #c5d9f1; overflow: hidden; }
.grid-area { width: 1261px; height: 742px; position: relative; overflow: hidden; background: #fff; }
.sheet { border-collapse: collapse; table-layout: fixed; width: 1261px; font-family: "Lato", "Liberation Sans", sans-serif; color: #000; }
.c-rh { width: 33.500px; } .c-a { width: 97px; } .c-b { width: 97px; } .c-c { width: 102px; } .c-d { width: 105px; } .c-e { width: 111px; } .c-f { width: 97px; } .c-g { width: 103px; } .c-h { width: 140px; } .c-i { width: 98px; } .c-j { width: 127px; } .c-k { width: 120px; } .c-l { width: 30.500px; }
.sheet td { border: 1px solid #d0d7e5; padding: 0 2px; white-space: nowrap; overflow: visible; line-height: 1; vertical-align: middle; }
.sheet tbody th { background: #e4ecf7; border: 1px solid #9eb6ce; font-weight: normal; font-size: 14.500px; color: #2b3e55; text-align: center; vertical-align: bottom; padding: 0 0 3px; line-height: 1; }
.sheet thead th { background: linear-gradient(#f4f7fb, #dce6f2); border: 1px solid #9eb6ce; border-top: 0; font-weight: normal; font-size: 14.500px; color: #2b3e55; text-align: center; vertical-align: middle; padding: 0; line-height: 1; }
.sheet thead th.corner { position: relative; background: #cfdcee; }
.corner-tri { position: absolute; right: 2px; bottom: 2px; width: 0; height: 0; border-left: 16px solid transparent; border-bottom: 16px solid #f2f6fb; }
.sheet thead th.col-on { background: linear-gradient(#f9dc97, #f6b75c); }
.sheet tbody th.row-on { background: linear-gradient(#fbdb9e, #f8c27a); border-color: #f1a53f; }
.h-hd { height: 23px; } .h31 { height: 31px; } .h29 { height: 29px; } .h30 { height: 30px; } .h24 { height: 24px; } .h64 { height: 64px; } .h36 { height: 36px; } .h25 { height: 25px; } .h23 { height: 23px; }
.sheet .h36 td { padding-top: 2px; }

.sheet td.lbl { font-weight: bold; font-size: 21.200px; padding-top: 2px; }
.sheet td.box { border: 2px solid #000; text-align: right; }
.val-red { font-weight: bold; font-size: 15.800px; color: #f00; vertical-align: bottom !important; padding-bottom: 3px !important; }
.val-big { font-size: 21.500px; color: #f00; padding-top: 2px !important; }
.val-yel { font-weight: bold; font-size: 21px; background: #ff0; }
.lilac { background: #e4dfec; }
.peach { background: #fcd5b4; }
.pink { background: #f2dcdb; }
.pale-blue { background: #daeef3; }
.maxc { font-weight: bold; font-size: 21px; text-align: center; }
.sigma-cell { text-align: right; font-size: 23px; padding-right: 1px !important; }

.sheet td.lh { background: #dbe5f1; font: bold 18.300px/23px "Liberation Serif", serif; text-align: center; padding: 3px 0 0; }
.sheet td.rh { background: #f2dcdb; font-weight: bold; font-size: 15.800px; line-height: 24px; text-align: center; padding: 3px 0 0; }
.sheet td.rh-w { font-size: 15px; }
.rh2 { font-size: 16px; }
.sheet td sub, .sheet td sup { font-size: 72%; line-height: 0; }
.sheet td.t2 { border-top: 2px solid #000; }
.sheet td.l2 { border-left: 2px solid #000; }
.sheet td.r2 { border-right: 2px solid #000; }
.sheet td.r1 { border-right: 1px solid #000; }
.sheet td.b1 { border-bottom: 1px solid #000; }
.sheet td.b2 { border-bottom: 2px solid #000; }
.sheet td.dbl { border-bottom: 3px double #000; }
.sheet td.ln { background: #dbe5f1; font: 18px "Liberation Serif", serif; border-bottom: 1px solid #dbe5f1; }
.sheet td.ln.b2 { border-bottom: 2px solid #000; }
.sheet td.sv { font: 22.300px "Liberation Serif", serif; text-align: right; }
.sheet td.cv { font-size: 20.500px; text-align: center; }
.sheet td.wv { font-weight: bold; font-size: 16px; text-align: center; }
.sheet td.nv { font-size: 15.600px; text-align: center; color: #222; }
.sheet td.wt { font-weight: bold; font-size: 15.800px; text-align: center; }
.sheet td.wred { font-weight: bold; font-size: 15px; color: #e0141c; text-align: center; vertical-align: bottom; padding-bottom: 4px; }
.sheet td.sel { border: 3px solid #111; position: relative; }
.handle { position: absolute; right: -5px; bottom: -5px; width: 7px; height: 7px; background: #111; border: 1px solid #fff; }

/* floating objects over the sheet */
.obj { position: absolute; background: #fff; font-family: "Liberation Serif", serif; color: #333; white-space: nowrap; }
.obj sub { font-size: 68%; }
.obj-rsp { left: 34px; top: 166px; width: 102px; height: 45px; font-size: 22px; padding: 6px 0 0 4px; color: #4a4a4a; }
.par { font-size: 122%; font-weight: normal; }
.obj-main { left: 435px; top: 605px; width: 458px; height: 84px; display: flex; align-items: center; gap: 3px; padding: 0 0 0 4px; font-size: 25px; color: #222; }
.obj-main > .eq { margin: 0 3px; }
.sum { display: flex; flex-direction: column; align-items: center; font-size: 14px; font-weight: bold; line-height: 14px; width: 30px; margin: 0 2px; }
.sum b { font-weight: bold; font-size: 15px; }
.sg { font-size: 50px; line-height: 50px; height: 50px; font-weight: normal; color: #111; position: relative; top: -9px; }
.obj-sum { left: 620px; top: 720px; width: 105px; height: 40px; font-size: 19px; padding-left: 10px; display: flex; align-items: flex-start; gap: 6px; line-height: 26px; padding-top: 7px; color: #222; }
.sg2 { font-size: 30px; line-height: 24px; }
.ellipse { position: absolute; left: 594px; top: 229px; }

.vscroll { width: 19px; display: flex; flex-direction: column; background: #7e9dc6; }
.vs-btn { height: 16px; flex: none; display: flex; align-items: center; justify-content: center; background: #cfddf0; }
.vs-btn:last-child { background: #7e9dc6; }
.tri-up { border-left: 5px solid transparent; border-right: 5px solid transparent; border-bottom: 5px solid #4a6a96; }
.tri-down { border-left: 5px solid transparent; border-right: 5px solid transparent; border-top: 5px solid #2c4a74; }
.vs-track { flex: 1; position: relative; padding-top: 460px; }
.vs-thumb { display: flex; align-items: center; justify-content: center; height: 161px; width: 17px; margin-left: 1px; border: 1px solid #8aa6c8; border-radius: 2px; background: linear-gradient(90deg, #e8eff8, #cdd9e8); }
.grip { width: 8px; height: 7px; border-top: 1px solid #7c8fa8; border-bottom: 1px solid #7c8fa8; background: linear-gradient(#7c8fa8, #7c8fa8) 0 2px/100% 1px no-repeat; }

/* sheet tabs */
.tabs-bar { height: 19px; flex: none; display: flex; align-items: stretch; background: #7e9dc6; border-top: 1px solid #8fa9c9; }
.tab-nav { width: 75px; flex: none; display: flex; align-items: center; background: linear-gradient(#d8e6f7, #bcd2ed); border-right: 1px solid #8fa9c9; padding-left: 2px; }
.stab { position: relative; display: flex; align-items: center; flex: none; font-size: 13.500px; color: #2c5a96; white-space: nowrap; background: linear-gradient(#e2edf9, #c3d7f0); }
.s1 { width: 141px; margin-left: 0; padding-left: 28px; clip-path: polygon(14px 0, 100% 0, 100% 100%, 0 100%); }
.s2 { width: 134px; padding-left: 20px; clip-path: polygon(14px 0, 100% 0, 100% 100%, 0 100%); }
.stab.active { width: 226px; font-weight: bold; font-size: 14.900px; color: #15428b; padding-left: 10px; background: linear-gradient(#ffffff, #e8f0fa); border-bottom: 2px solid #b4cbe8; clip-path: polygon(0 0, 100% 0, calc(100% - 14px) 100%, 0 100%); }
.newtab { width: 44px; justify-content: flex-start; padding-left: 9px; clip-path: polygon(14px 0, 100% 0, calc(100% - 14px) 100%, 0 100%); }
.tabs-fill { flex: 1; }
.hscroll { width: 521px; flex: none; display: flex; align-items: center; }
.hs-split { width: 4px; height: 15px; background: #dbe7f5; border: 1px solid #7d97b9; flex: none; }
.hs-split.end { margin-left: 9px; }
.tri-left { border-top: 6px solid transparent; border-bottom: 6px solid transparent; border-right: 6px solid #36567f; margin: 0 10px 0 7px; flex: none; }
.tri-right { border-top: 6px solid transparent; border-bottom: 6px solid transparent; border-left: 6px solid #36567f; margin-left: 137px; flex: none; }
.hs-thumb { width: 321px; height: 17px; flex: none; display: flex; align-items: center; justify-content: center; border: 1px solid #8aa6c8; border-radius: 2px; background: linear-gradient(#eef2f8, #c6d2e2); }
.grip-v { width: 7px; height: 8px; border-left: 1px solid #7c8fa8; border-right: 1px solid #7c8fa8; background: linear-gradient(#7c8fa8, #7c8fa8) 2px 0/1px 100% no-repeat; }

/* status bar */
.statusbar { height: 29px; flex: none; position: relative; display: flex; align-items: center; justify-content: space-between; background: linear-gradient(#d8e7f9, #bcd4f1 40%, #b7cfee 70%, #c6daf2); border-bottom: 1px solid #f2f4f8; }
.st-ready { font-size: 12.5px; color: #2e4a72; padding: 0 8px 0 7px; border-right: 1px solid #9db7d6; height: 22px; line-height: 22px; width: 64px; }
.st-right { width: 298px; height: 28px; display: flex; align-items: center; background: linear-gradient(#b9d0ed, #a7c2e5); border-left: 1px solid #8fa9c9; padding-left: 7px; }
.views { display: flex; width: 68px; height: 23px; border: 1px solid #9db7d6; border-radius: 2px; background: linear-gradient(#cfdff2, #b7cde9); }
.vbtn { width: 22px; flex: none; display: flex; align-items: center; justify-content: center; border-right: 1px solid #a6bedc; }
.vbtn.on { background: linear-gradient(#fce9bc, #f9c566); }
.vbtn:last-child { border-right: 0; }
.zoom-txt { width: 50px; text-align: center; font-size: 12.5px; color: #2e4a72; margin-left: 0; }
.zbtn { width: 20px; height: 20px; flex: none; border: 1.500px solid #5d7ba0; border-radius: 50%; background: radial-gradient(circle at 50% 30%, #fff, #c8d8ec); font: bold 15px/16px "Liberation Sans", sans-serif; color: #4f6f95; text-align: center; }
.zslider { width: 127px; height: 18px; position: relative; flex: none; background: linear-gradient(#6c8bb2, #6c8bb2) 0 9px/100% 1px no-repeat; }
.zthumb { position: absolute; left: 57px; top: 1px; }

/* taskbar */
.taskbar { flex: 1; display: flex; align-items: center; gap: 3px; padding: 0 2px 2px; background: #d4d0c8; }
.start, .task { height: 26px; flex: none; display: flex; align-items: center; border: 1px solid #808080; border-top-color: #fff; border-left-color: #fff; box-shadow: inset -1px -1px 0 #a8a49c; font-size: 13.700px; color: #111; white-space: nowrap; }
.start { width: 61px; gap: 2px; padding-left: 2px; font-weight: bold; font-size: 15px; margin-right: 3px; }
.task { width: 160px; padding-left: 3px; gap: 2px; }
.tk-ic { width: 21px; height: 20px; flex: none; }
.task.current { border-color: #808080 #fff #fff #808080; box-shadow: none; background: repeating-conic-gradient(#fff 0 25%, #d4d0c8 0 50%) 0 0/2px 2px; font-size: 16px; }
.tb-fill { flex: 1; }
.lang { width: 16px; height: 24px; background: #0a246a; color: #fff; font-size: 14px; line-height: 24px; text-align: center; overflow: hidden; flex: none; letter-spacing: -.5px; }
.tray { width: 189px; height: 28px; flex: none; display: flex; align-items: center; gap: 2px; padding-left: 1px; border: 1px solid #fff; border-top-color: #888; border-left-color: #888; margin-left: 1px; margin-right: 0; }
.tr-ic { width: 20px; height: 20px; flex: none; }
.clock { margin-left: 10px; font-size: 14.300px; color: #111; }
```
